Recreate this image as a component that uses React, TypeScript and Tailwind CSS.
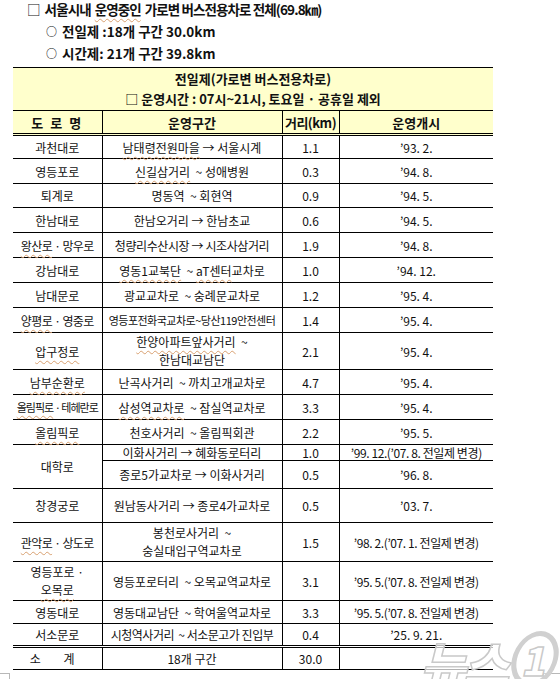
import React from "react";

type Row = {
  road?: string;
  roadCls?: string;
  roadSpan?: number;
  section: React.ReactNode;
  sectionCls?: string;
  dist: string;
  start: string;
  startCls?: string;
  h: string;
};

const sq = "underline decoration-wavy decoration-[#d8a070] decoration-1 underline-offset-[3px]";

const rows: Row[] = [
  { road: "과천대로", section: <><span className={sq}>남태령전원마을</span> → 서울시계</>, dist: "1.1", start: "’93. 2.", h: "h-[24px]" },
  { road: "영등포로", section: <><span className={sq}>신길삼거리</span>  ~ 성애병원</>, dist: "0.3", start: "’94. 8.", h: "h-[25px]" },
  { road: "퇴계로", section: "명동역  ~ 회현역", dist: "0.9", start: "’94. 5.", h: "h-[24px]" },
  { road: "한남대로", section: "한남오거리 → 한남초교", dist: "0.6", start: "’94. 5.", h: "h-[25px]" },
  { road: "왕산로 · 망우로", roadCls: "tracking-[-0.6px]", section: "청량리수산시장 → 시조사삼거리", sectionCls: "tracking-[-0.4px]", dist: "1.9", start: "’94. 8.", h: "h-[25px]" },
  { road: "강남대로", section: <><span className={sq}>영동1교북단</span>  ~ <span className={sq}>aT센터</span>교차로</>, dist: "1.0", start: "’94. 12.", h: "h-[25px]" },
  { road: "남대문로", section: "광교교차로  ~ 숭례문교차로", dist: "1.2", start: "’95. 4.", h: "h-[25px]" },
  { road: "양평로 · 영중로", roadCls: "tracking-[-0.6px]", section: "영등포전화국교차로~당산119안전센터", sectionCls: "text-[11px] tracking-[-0.5px]", dist: "1.4", start: "’95. 4.", h: "h-[25px]" },
  { road: "압구정로", section: <><span className={sq}>한양아파트앞사거리</span>  ~<br />한남대교남단</>, sectionCls: "leading-[18px]", dist: "2.1", start: "’95. 4.", h: "h-[37px]" },
  { road: "남부순환로", section: "난곡사거리  ~ 까치고개교차로", dist: "4.7", start: "’95. 4.", h: "h-[25px]" },
  { road: "올림픽로 · 테헤란로", roadCls: "text-[11px] tracking-[-1px]", section: <><span className={sq}>삼성역교차로</span>  ~ 잠실역교차로</>, dist: "3.3", start: "’95. 4.", h: "h-[25px]" },
  { road: "올림픽로", section: "천호사거리  ~ 올림픽회관", dist: "2.2", start: "’95. 5.", h: "h-[25px]" },
  { road: "대학로", roadSpan: 2, section: "이화사거리 → 혜화동로터리", dist: "1.0", start: "’99. 12.(’07. 8. 전일제 변경)", startCls: "tracking-[-0.4px]", h: "h-[35px]" },
  { section: "종로5가교차로 → 이화사거리", dist: "0.5", start: "’96. 8.", h: "h-[28px]" },
  { road: "창경궁로", section: "원남동사거리 → 종로4가교차로", dist: "0.5", start: "’03. 7.", h: "h-[34px]" },
  { road: "관악로 · 상도로", roadCls: "tracking-[-0.6px]", section: <>봉천로사거리  ~<br />숭실대입구역교차로</>, sectionCls: "leading-[18px]", dist: "1.5", start: "’98. 2.(’07. 1. 전일제 변경)", startCls: "tracking-[-0.4px]", h: "h-[39px]" },
  { road: "영등포로 ·\n오목로", section: "영등포로터리  ~ 오목교역교차로", dist: "3.1", start: "’95. 5.(’07. 8. 전일제 변경)", startCls: "tracking-[-0.4px]", h: "h-[39px]" },
  { road: "영동대로", section: "영동대교남단  ~ 학여울역교차로", dist: "3.3", start: "’95. 5.(’07. 8. 전일제 변경)", startCls: "tracking-[-0.4px]", h: "h-[23px]" },
  { road: "서소문로", section: "시청역사거리  ~ 서소문고가 진입부", sectionCls: "tracking-[-0.5px]", dist: "0.4", start: "’25. 9. 21.", h: "h-[23px]" },
];

const squiggleRoads = ["왕산로 · 망우로", "양평로 · 영중로", "압구정로", "남부순환로", "올림픽로 · 테헤란로", "올림픽로", "관악로 · 상도로"];

function RoadName({ name }: { name: string }) {
  if (name === "영등포로 ·\n오목로") {
    return (
      <span className="inline-block leading-[18px]">
        영등포로 ·<br />
        <span className={sq}>오목로</span>
      </span>
    );
  }
  if (squiggleRoads.includes(name)) {
    const parts = name.split(" · ");
    if (parts.length === 2) {
      return (
        <span>
          <span className={sq}>{parts[0]}</span> · {parts[1]}
        </span>
      );
    }
    return <span className={sq}>{name}</span>;
  }
  return <span>{name}</span>;
}

export default function App() {
  const cell = "border-b border-black text-center align-middle p-0 whitespace-pre";

  return (
    <div className="relative w-[560px] h-[679px] bg-white overflow-hidden font-['Noto_Sans_CJK_KR',sans-serif] text-[#111]">
      {/* 상단 요약 */}
      <div className="mt-[1px] h-[16px] pl-[27px] flex items-center text-[13.5px] font-bold tracking-[-0.9px] leading-[16px]">
        <span className="mr-[5px] font-normal">□</span>
        서울시내 <span className={sq + " mx-[4px]"}>운영중인</span> 가로변 버스전용차로 전체(69.8㎞)
      </div>
      <div className="mt-[6px] h-[16px] pl-[46px] flex items-center text-[13.5px] font-bold leading-[16px]">
        <span className="mr-[5px] text-[11px]">○</span>전일제 :18개 구간 30.0km
      </div>
      <div className="mt-[6px] h-[16px] pl-[46px] flex items-center text-[13.5px] font-bold leading-[16px]">
        <span className="mr-[5px] text-[11px]">○</span>시간제: 21개 구간 39.8km
      </div>

      {/* 표 */}
      <table className="mt-[6px] ml-[13px] w-[480px] border-collapse table-fixed text-[12px] leading-[15px]">
        <colgroup>
          <col className="w-[89px]" />
          <col className="w-[180px]" />
          <col className="w-[57px]" />
          <col className="w-[154px]" />
        </colgroup>
        <thead>
          <tr className="bg-[#ffffcc]">
            <th colSpan={4} className="h-[43px] border-t border-b border-black p-0 text-[13px] font-bold leading-[20px]">
              <div>전일제(가로변 버스전용차로)</div>
              <div>□ 운영시간 : 07시~21시, 토요일 · 공휴일 제외</div>
            </th>
          </tr>
          <tr className="bg-[#ffffcc] text-[13px] font-bold">
            <th className="h-[24px] border-b-[3px] border-double border-black p-0 tracking-[2px]">도 로 명</th>
            <th className="border-b-[3px] border-l border-double border-black p-0">운영구간</th>
            <th className="border-b-[3px] border-l border-double border-black p-0 tracking-[-0.5px]">거리(km)</th>
            <th className="border-b-[3px] border-l border-double border-black p-0">운영개시</th>
          </tr>
        </thead>
        <tbody>
          {rows.map((r, i) => (
            <tr key={i}>
              {r.road && (
                <td rowSpan={r.roadSpan} className={`${cell} ${r.h} ${r.roadCls ?? ""} ${i === rows.length - 1 ? "border-b-[3px] border-double" : ""}`}>
                  <RoadName name={r.road} />
                </td>
              )}
              <td className={`${cell} border-l ${r.road ? "" : r.h} ${r.sectionCls ?? ""} ${i === rows.length - 1 ? "border-b-[3px] border-double" : ""}`}>
                {r.section}
              </td>
              <td className={`${cell} border-l ${i === rows.length - 1 ? "border-b-[3px] border-double" : ""}`}>{r.dist}</td>
              <td className={`${cell} border-l ${r.startCls ?? ""} ${i === rows.length - 1 ? "border-b-[3px] border-double" : ""}`}>{r.start}</td>
            </tr>
          ))}
          <tr>
            <td className={`${cell} h-[23px] tracking-[10px]`}>소 계</td>
            <td className={`${cell} border-l`}>18개 구간</td>
            <td className={`${cell} border-l`}>30.0</td>
            <td className={`${cell} border-l`}></td>
          </tr>
        </tbody>
      </table>

      {/* 페이지 모서리 표시 */}
      <div className="absolute left-0 top-[673px] w-[10px] h-[6px] border-t border-r border-[#b8b8b8]" />
      <div className="absolute left-[543px] top-[673px] w-[17px] h-[6px] border-t border-l border-[#b8b8b8]" />

      {/* 워터마크 */}
      <div className="absolute right-[2px] bottom-[-8px] flex items-end text-[50px] font-black italic leading-none text-white/70 [-webkit-text-stroke:1.5px_#c9c9c9] tracking-[-3px] select-none">
        <span>뉴스</span>
        <span className="ml-[6px] inline-flex items-center justify-center w-[46px] h-[56px] rounded-[50%] border-[5px] border-[#d0d0d0] -skew-x-12 bg-white/40 text-[40px] not-italic">1</span>
      </div>
    </div>
  );
}
